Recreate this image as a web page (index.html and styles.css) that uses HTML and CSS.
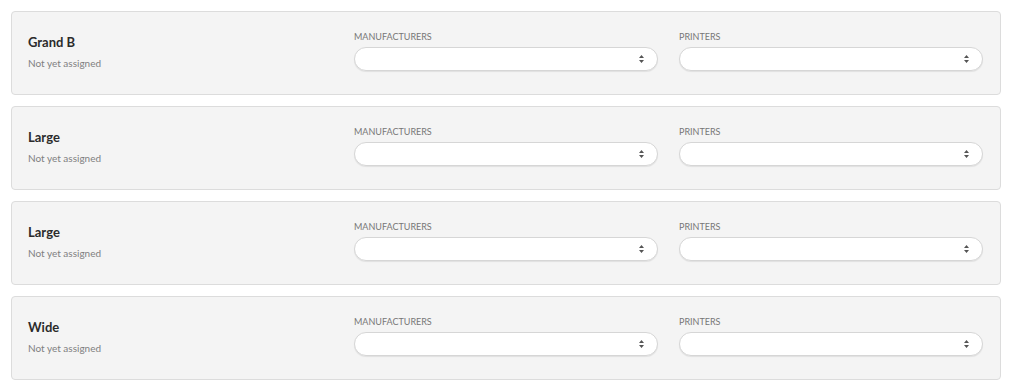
FILE: index.html
```html
<!DOCTYPE html>
<html lang="en">
<head>
    <meta charset="UTF-8">
    <meta name="viewport" content="width=device-width, initial-scale=1.0">
    <title>printer sizes</title>

    <!-- styling -->
    <link rel="stylesheet" href="styles.css">
</head>
<body>
    <div class="size-list">

        <div class="size-card">
            <div class="size-info">
                <h2 class="size-name">Grand B</h2>
                <p class="size-status">Not yet assigned</p>
            </div>
            <div class="field">
                <label class="field-label">Manufacturers</label>
                <div class="select-box">
                    <svg class="select-arrows" width="5" height="8" viewBox="0 0 5 8"><path d="M0 3L2.5 0L5 3Z M0 5L2.5 8L5 5Z" fill="#555"/></svg>
                </div>
            </div>
            <div class="field">
                <label class="field-label">Printers</label>
                <div class="select-box">
                    <svg class="select-arrows" width="5" height="8" viewBox="0 0 5 8"><path d="M0 3L2.5 0L5 3Z M0 5L2.5 8L5 5Z" fill="#555"/></svg>
                </div>
            </div>
        </div>

        <div class="size-card">
            <div class="size-info">
                <h2 class="size-name">Large</h2>
                <p class="size-status">Not yet assigned</p>
            </div>
            <div class="field">
                <label class="field-label">Manufacturers</label>
                <div class="select-box">
                    <svg class="select-arrows" width="5" height="8" viewBox="0 0 5 8"><path d="M0 3L2.5 0L5 3Z M0 5L2.5 8L5 5Z" fill="#555"/></svg>
                </div>
            </div>
            <div class="field">
                <label class="field-label">Printers</label>
                <div class="select-box">
                    <svg class="select-arrows" width="5" height="8" viewBox="0 0 5 8"><path d="M0 3L2.5 0L5 3Z M0 5L2.5 8L5 5Z" fill="#555"/></svg>
                </div>
            </div>
        </div>

        <div class="size-card">
            <div class="size-info">
                <h2 class="size-name">Large</h2>
                <p class="size-status">Not yet assigned</p>
            </div>
            <div class="field">
                <label class="field-label">Manufacturers</label>
                <div class="select-box">
                    <svg class="select-arrows" width="5" height="8" viewBox="0 0 5 8"><path d="M0 3L2.5 0L5 3Z M0 5L2.5 8L5 5Z" fill="#555"/></svg>
                </div>
            </div>
            <div class="field">
                <label class="field-label">Printers</label>
                <div class="select-box">
                    <svg class="select-arrows" width="5" height="8" viewBox="0 0 5 8"><path d="M0 3L2.5 0L5 3Z M0 5L2.5 8L5 5Z" fill="#555"/></svg>
                </div>
            </div>
        </div>

        <div class="size-card">
            <div class="size-info">
                <h2 class="size-name">Wide</h2>
                <p class="size-status">Not yet assigned</p>
            </div>
            <div class="field">
                <label class="field-label">Manufacturers</label>
                <div class="select-box">
                    <svg class="select-arrows" width="5" height="8" viewBox="0 0 5 8"><path d="M0 3L2.5 0L5 3Z M0 5L2.5 8L5 5Z" fill="#555"/></svg>
                </div>
            </div>
            <div class="field">
                <label class="field-label">Printers</label>
                <div class="select-box">
                    <svg class="select-arrows" width="5" height="8" viewBox="0 0 5 8"><path d="M0 3L2.5 0L5 3Z M0 5L2.5 8L5 5Z" fill="#555"/></svg>
                </div>
            </div>
        </div>

    </div>
</body>
</html>
```

FILE: styles.css
```css
body {
    margin: 0;
    padding: 11px 16px 11px 11px;
    background-color: #ffffff;
    font-family: 'Lato', 'Open Sans', sans-serif;
}

.size-list {
    display: flex;
    flex-direction: column;
    gap: 11px;
}

.size-card {
    display: grid;
    grid-template-columns: 305px 1fr 1fr;
    column-gap: 21px;
    align-items: center;
    height: 84px;
    box-sizing: border-box;
    padding: 0 17px 0 16px;
    background-color: #f4f4f4;
    border: 1px solid #dcdcdc;
    border-radius: 4px;
}

.size-info {
    padding-bottom: 2px;
}

.size-name {
    margin: 0;
    font-size: 13px;
    font-weight: 700;
    color: #2b2b2b;
    line-height: 16px;
}

.size-status {
    margin: 7px 0 0;
    font-size: 10px;
    color: #808080;
    line-height: 13px;
}

.field {
    display: flex;
    flex-direction: column;
    gap: 5px;
    padding-bottom: 5px;
}

.field-label {
    font-size: 9px;
    line-height: 11px;
    text-transform: uppercase;
    color: #777777;
}

.select-box {
    display: flex;
    justify-content: flex-end;
    align-items: center;
    height: 24px;
    box-sizing: border-box;
    padding-right: 13px;
    background-color: #ffffff;
    border: 1px solid #d6d6d6;
    border-radius: 12px;
    box-shadow: 0 1px 1px rgba(0, 0, 0, 0.08);
}

.select-arrows {
    display: block;
}
```
